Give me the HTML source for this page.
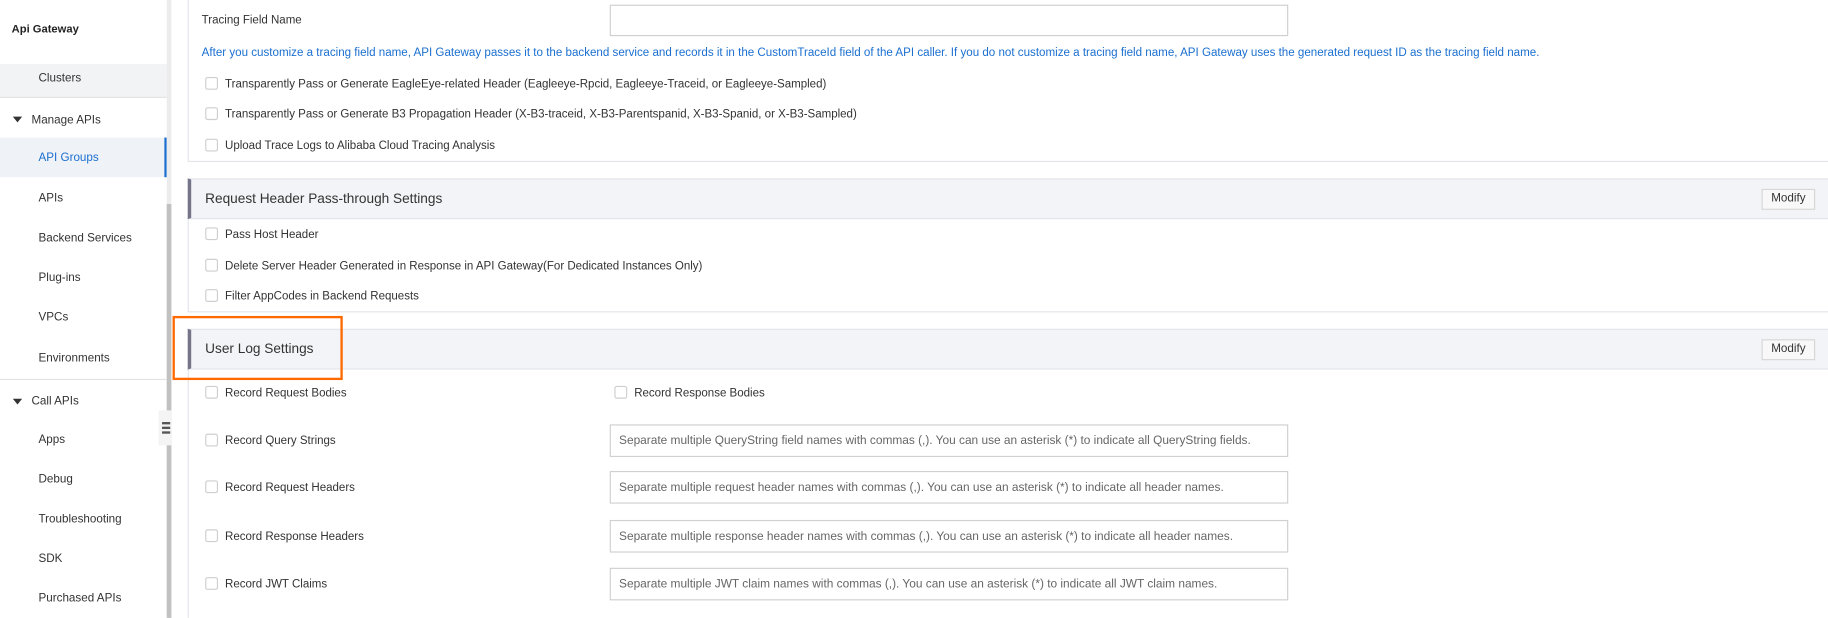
<!DOCTYPE html>
<html><head><meta charset="utf-8"><style>
*{box-sizing:border-box;margin:0;padding:0}
html,body{width:1828px;height:617px;overflow:hidden;background:#fff}
#w{position:absolute;left:0;top:0;width:1568px;height:530px;transform:scale(1.16582);transform-origin:0 0;font-family:"Liberation Sans",Arial,sans-serif;font-size:10px;color:#333}
.a{position:absolute;white-space:nowrap}
.cb{position:absolute;width:11px;height:11px;border:1px solid #cfcfcf;border-radius:2px;background:#fff;margin-top:-2px}
.inp{position:absolute;left:523px;width:582px;height:28px;border:1px solid #d0d0d0;background:#fff;font-size:10.2px;color:#666;padding:8px 0 0 7px;white-space:nowrap}
.hdr{position:absolute;left:161px;right:0;height:35px;background:#f3f4f7;border-top:1px solid #e3e5ea;border-bottom:1px solid #e3e5ea;border-left:3px solid #75758a}
.btn{position:absolute;right:11px;top:8px;width:46px;height:18px;border:1px solid #d6d6d6;background:#f8f8f8;font-size:10px;text-align:center;line-height:16px;color:#333}
.side{font-size:10px;color:#333}
.row{font-size:9.9px}
</style></head><body><div id="w">
<!-- sidebar -->
<div class="a" style="left:10px;top:20px;font-weight:bold;font-size:9.6px;color:#222">Api Gateway</div>
<div class="a" style="left:0;top:55px;width:143px;height:28px;background:#f2f3f5"></div>
<div class="a side" style="left:33px;top:62px">Clusters</div>
<div class="a" style="left:0;top:83px;width:143px;height:1px;background:#e2e2e2"></div>
<div class="a" style="left:11px;top:100px;width:0;height:0;border-left:4px solid transparent;border-right:4px solid transparent;border-top:5px solid #333"></div>
<div class="a side" style="left:27px;top:98px">Manage APIs</div>
<div class="a" style="left:0;top:118px;width:143px;height:34px;background:#eff2f6"></div>
<div class="a" style="left:141px;top:118px;width:2px;height:34px;background:#1b6fd0"></div>
<div class="a side" style="left:33px;top:130px;color:#1b6fd0">API Groups</div>
<div class="a side" style="left:33px;top:165px">APIs</div>
<div class="a side" style="left:33px;top:199px">Backend Services</div>
<div class="a side" style="left:33px;top:233px">Plug-ins</div>
<div class="a side" style="left:33px;top:267px">VPCs</div>
<div class="a side" style="left:33px;top:302px">Environments</div>
<div class="a" style="left:0;top:325px;width:143px;height:1px;background:#e2e2e2"></div>
<div class="a" style="left:11px;top:342px;width:0;height:0;border-left:4px solid transparent;border-right:4px solid transparent;border-top:5px solid #333"></div>
<div class="a side" style="left:27px;top:339px">Call APIs</div>
<div class="a side" style="left:33px;top:372px">Apps</div>
<div class="a side" style="left:33px;top:406px">Debug</div>
<div class="a side" style="left:33px;top:440px">Troubleshooting</div>
<div class="a side" style="left:33px;top:474px">SDK</div>
<div class="a side" style="left:33px;top:508px">Purchased APIs</div>
<div class="a" style="left:143px;top:0;width:4px;height:530px;background:#ececec"></div>
<div class="a" style="left:143px;top:175px;width:4px;height:355px;background:#c1c1c1"></div>
<div class="a" style="left:136px;top:352px;width:11px;height:30px;background:#f4f4f4"></div>
<div class="a" style="left:139px;top:362px;width:7px;height:2px;background:#555"></div>
<div class="a" style="left:139px;top:366px;width:7px;height:2px;background:#555"></div>
<div class="a" style="left:139px;top:370px;width:7px;height:2px;background:#555"></div>

<!-- top panel -->
<div class="a" style="left:161px;top:0;width:1px;height:139px;background:#e3e5ea"></div>
<div class="a" style="left:161px;top:138px;right:0;height:1px;background:#e3e5ea"></div>
<div class="a row" style="left:173px;top:12px">Tracing Field Name</div>
<div class="inp" style="top:4px;height:27px"></div>
<div class="a" style="left:173px;top:40px;color:#1b6fd0;font-size:9.95px">After you customize a tracing field name, API Gateway passes it to the backend service and records it in the CustomTraceId field of the API caller. If you do not customize a tracing field name, API Gateway uses the generated request ID as the tracing field name.</div>
<div class="cb" style="left:176px;top:68px"></div><div class="a row" style="left:193px;top:67px">Transparently Pass or Generate EagleEye-related Header (Eagleeye-Rpcid, Eagleeye-Traceid, or Eagleeye-Sampled)</div>
<div class="cb" style="left:176px;top:94px"></div><div class="a row" style="left:193px;top:93px">Transparently Pass or Generate B3 Propagation Header (X-B3-traceid, X-B3-Parentspanid, X-B3-Spanid, or X-B3-Sampled)</div>
<div class="cb" style="left:176px;top:121px"></div><div class="a row" style="left:193px;top:120px">Upload Trace Logs to Alibaba Cloud Tracing Analysis</div>

<!-- request header -->
<div class="hdr" style="top:153px"><div class="a" style="left:12px;top:10px;font-size:11.7px">Request Header Pass-through Settings</div><div class="btn">Modify</div></div>
<div class="a" style="left:161px;top:188px;width:1px;height:80px;background:#e3e5ea"></div>
<div class="a" style="left:161px;top:267px;right:0;height:1px;background:#e3e5ea"></div>
<div class="cb" style="left:176px;top:197px"></div><div class="a row" style="left:193px;top:196px">Pass Host Header</div>
<div class="cb" style="left:176px;top:224px"></div><div class="a row" style="left:193px;top:223px">Delete Server Header Generated in Response in API Gateway(For Dedicated Instances Only)</div>
<div class="cb" style="left:176px;top:250px"></div><div class="a row" style="left:193px;top:249px">Filter AppCodes in Backend Requests</div>

<!-- user log -->
<div class="hdr" style="top:282px"><div class="a" style="left:12px;top:10px;font-size:11.7px">User Log Settings</div><div class="btn">Modify</div></div>
<div class="a" style="left:161px;top:317px;width:1px;height:213px;background:#e3e5ea"></div>
<div class="a" style="left:148px;top:271px;width:146px;height:55px;border:2px solid #ff6a00"></div>
<div class="cb" style="left:176px;top:333px"></div><div class="a row" style="left:193px;top:332px">Record Request Bodies</div>
<div class="cb" style="left:527px;top:333px"></div><div class="a row" style="left:544px;top:332px">Record Response Bodies</div>
<div class="cb" style="left:176px;top:374px"></div><div class="a row" style="left:193px;top:373px">Record Query Strings</div>
<div class="inp" style="top:364px">Separate multiple QueryString field names with commas (,). You can use an asterisk (*) to indicate all QueryString fields.</div>
<div class="cb" style="left:176px;top:414px"></div><div class="a row" style="left:193px;top:413px">Record Request Headers</div>
<div class="inp" style="top:404px">Separate multiple request header names with commas (,). You can use an asterisk (*) to indicate all header names.</div>
<div class="cb" style="left:176px;top:456px"></div><div class="a row" style="left:193px;top:455px">Record Response Headers</div>
<div class="inp" style="top:446px">Separate multiple response header names with commas (,). You can use an asterisk (*) to indicate all header names.</div>
<div class="cb" style="left:176px;top:497px"></div><div class="a row" style="left:193px;top:496px">Record JWT Claims</div>
<div class="inp" style="top:487px">Separate multiple JWT claim names with commas (,). You can use an asterisk (*) to indicate all JWT claim names.</div>
</div></body></html>
